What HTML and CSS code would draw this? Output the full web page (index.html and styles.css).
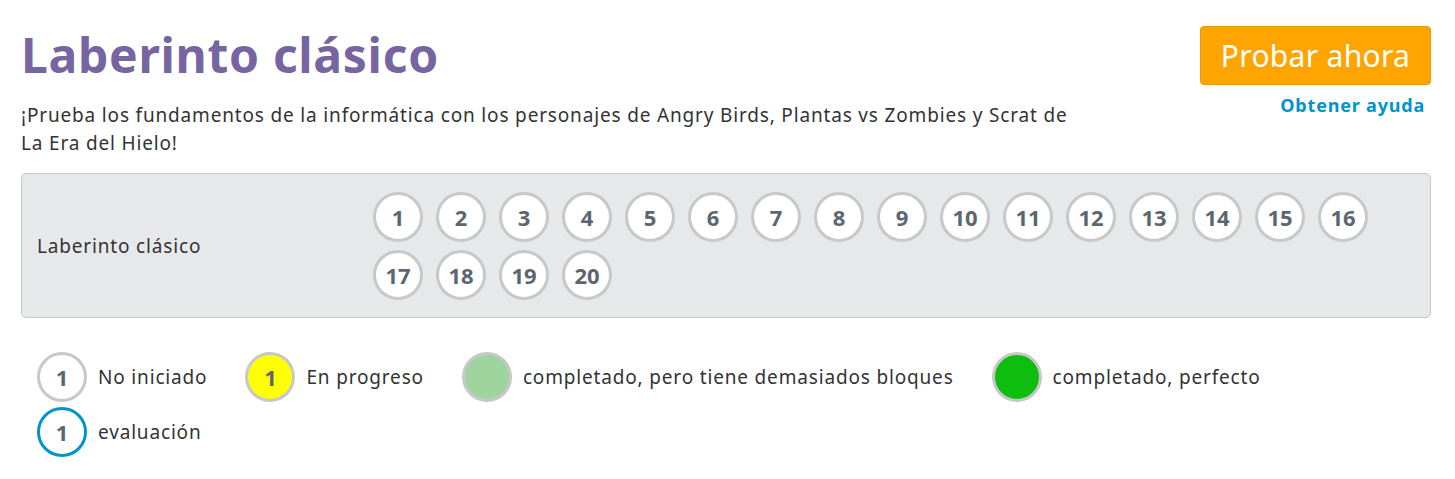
FILE: index.html
```html
<!DOCTYPE html>
<html lang="es">
<head>
    <meta charset="UTF-8">
    <meta name="viewport" content="width=device-width, initial-scale=1.0">
    <title>Laberinto clásico</title>
    <link rel="stylesheet" href="styles.css">
</head>
<body>
    <div class="page">
        <div class="header">
            <div class="intro">
                <h1>Laberinto clásico</h1>
                <p class="description">¡Prueba los fundamentos de la informática con los personajes de Angry Birds, Plantas vs Zombies y Scrat de La Era del Hielo!</p>
            </div>
            <div class="actions">
                <button class="try-btn">Probar ahora</button>
                <a class="help-link" href="#">Obtener ayuda</a>
            </div>
        </div>

        <div class="progress-box">
            <div class="stage-name">Laberinto clásico</div>
            <div class="bubbles">
                <span class="bubble">1</span>
                <span class="bubble">2</span>
                <span class="bubble">3</span>
                <span class="bubble">4</span>
                <span class="bubble">5</span>
                <span class="bubble">6</span>
                <span class="bubble">7</span>
                <span class="bubble">8</span>
                <span class="bubble">9</span>
                <span class="bubble">10</span>
                <span class="bubble">11</span>
                <span class="bubble">12</span>
                <span class="bubble">13</span>
                <span class="bubble">14</span>
                <span class="bubble">15</span>
                <span class="bubble">16</span>
                <span class="bubble">17</span>
                <span class="bubble">18</span>
                <span class="bubble">19</span>
                <span class="bubble">20</span>
            </div>
        </div>

        <div class="legend">
            <div class="legend-item">
                <span class="bubble">1</span>
                <span>No iniciado</span>
            </div>
            <div class="legend-item">
                <span class="bubble in-progress">1</span>
                <span>En progreso</span>
            </div>
            <div class="legend-item">
                <span class="bubble too-many"></span>
                <span>completado, pero tiene demasiados bloques</span>
            </div>
            <div class="legend-item">
                <span class="bubble perfect"></span>
                <span>completado, perfecto</span>
            </div>
            <div class="legend-item">
                <span class="bubble assessment">1</span>
                <span>evaluación</span>
            </div>
        </div>
    </div>
</body>
</html>
```

FILE: styles.css
```css
body{
    font-family: "Noto Sans", sans-serif;
    margin: 0;
    color: #333;
    letter-spacing: 0.83px;
}
.page{
    padding: 0 24px 0 21px;
}
.header{
    display: flex;
    justify-content: space-between;
    align-items: flex-start;
}
h1{
    margin: 22px 0 0 0;
    font-size: 48px;
    line-height: 66px;
    letter-spacing: 0.7px;
    font-weight: bold;
    color: #7665a0;
}
.description{
    margin: 13px 0 0 0;
    max-width: 1060px;
    font-size: 19px;
    line-height: 28px;
}
.actions{
    display: flex;
    flex-direction: column;
    align-items: flex-end;
    padding-top: 26px;
}
.try-btn{
    width: 231px;
    height: 59px;
    background-color: #ffa400;
    border: 1px solid #e89a0a;
    border-radius: 4px;
    color: white;
    font-family: inherit;
    font-size: 30px;
    letter-spacing: 0.3px;
    cursor: pointer;
}
.help-link{
    margin-top: 8px;
    margin-right: 6px;
    color: #0094ca;
    font-weight: bold;
    font-size: 18px;
    letter-spacing: 0.8px;
    text-decoration: none;
}
.progress-box{
    display: flex;
    align-items: center;
    margin-top: 16px;
    padding: 18px 0 17px 0;
    background-color: #e7e8ea;
    border: 1px solid #c6c8ca;
    border-radius: 5px;
}
.stage-name{
    width: 336px;
    padding-left: 15px;
    flex-shrink: 0;
    font-size: 19px;
}
.bubbles{
    display: flex;
    flex-wrap: wrap;
    gap: 8px 13px;
}
.bubble{
    box-sizing: border-box;
    width: 50px;
    height: 50px;
    display: flex;
    align-items: center;
    justify-content: center;
    background-color: white;
    border: 3px solid #c6c8ca;
    border-radius: 50%;
    color: #5b6770;
    font-weight: bold;
    font-size: 22px;
    letter-spacing: 0;
    flex-shrink: 0;
}
.legend{
    display: flex;
    flex-wrap: wrap;
    gap: 5px 38px;
    margin-top: 34px;
    padding-left: 16px;
    max-width: 1250px;
}
.legend-item{
    display: flex;
    align-items: center;
    gap: 11px;
    font-size: 19px;
}
.legend .bubble.in-progress{
    background-color: yellow;
}
.legend .bubble.too-many{
    background-color: #a0d49f;
}
.legend .bubble.perfect{
    background-color: #0ebe0e;
}
.legend .bubble.assessment{
    border-color: #0094ca;
}
```
